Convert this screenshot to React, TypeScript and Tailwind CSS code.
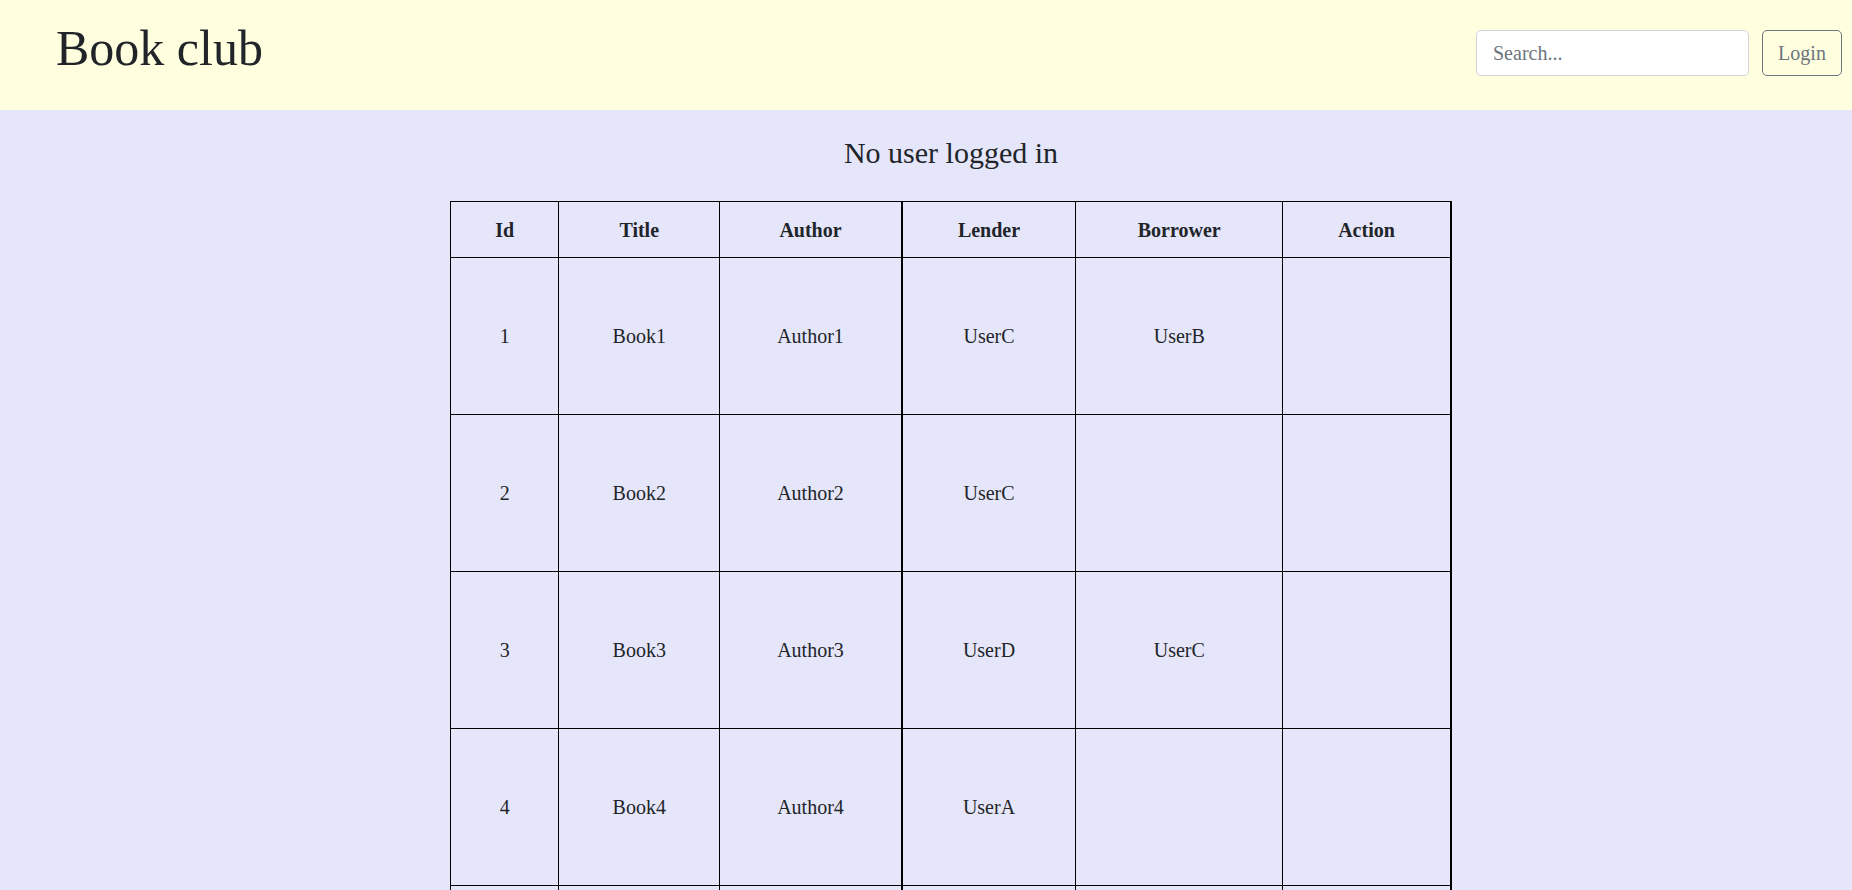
import { useState } from "react";

type Book = {
  id: number;
  title: string;
  author: string;
  lender: string;
  borrower: string;
};

const books: Book[] = [
  { id: 1, title: "Book1", author: "Author1", lender: "UserC", borrower: "UserB" },
  { id: 2, title: "Book2", author: "Author2", lender: "UserC", borrower: "" },
  { id: 3, title: "Book3", author: "Author3", lender: "UserD", borrower: "UserC" },
  { id: 4, title: "Book4", author: "Author4", lender: "UserA", borrower: "" },
  { id: 5, title: "Book5", author: "Author5", lender: "UserB", borrower: "" },
];

const cell = "border border-black text-center align-middle";

export default function App() {
  const [query, setQuery] = useState("");

  return (
    <div className="min-h-screen bg-[#e6e6fa] font-['Liberation_Serif','Times_New_Roman',serif] text-[#212529]">
      {/* Header */}
      <header className="flex h-[110px] items-start justify-between bg-[#ffffe0] pl-[56px] pr-[10px]">
        <h1 className="pt-[23px] text-[50px] leading-none font-normal">Book club</h1>
        <form className="flex gap-[13px] pt-[30px]" onSubmit={(e) => e.preventDefault()}>
          <input
            value={query}
            onChange={(e) => setQuery(e.target.value)}
            placeholder="Search..."
            className="h-[46px] w-[273px] rounded-[5px] border border-[#ced4da] bg-white px-[16px] text-[20px] text-[#212529] outline-none placeholder:text-[#6c757d]"
          />
          <button
            type="submit"
            className="h-[46px] w-[80px] rounded-[5px] border border-[#6c757d] bg-transparent text-[20px] text-[#6c757d]"
          >
            Login
          </button>
        </form>
      </header>

      {/* Main */}
      <main className="flex flex-col items-center pl-[50px]">
        <h4 className="mt-[28px] text-[30px] leading-[30px] font-normal">No user logged in</h4>

        <table className="mt-[33px] w-[1000px] table-fixed border-collapse text-[20px]">
          <colgroup>
            <col className="w-[108px]" />
            <col className="w-[161px]" />
            <col className="w-[182px]" />
            <col className="w-[174px]" />
            <col className="w-[207px]" />
            <col className="w-[168px]" />
          </colgroup>
          <thead>
            <tr className="h-[56px]">
              <th className={cell}>Id</th>
              <th className={cell}>Title</th>
              <th className={cell}>Author</th>
              <th className={`${cell} border-l-2`}>Lender</th>
              <th className={cell}>Borrower</th>
              <th className={`${cell} border-r-2`}>Action</th>
            </tr>
          </thead>
          <tbody>
            {books.map((b) => (
              <tr key={b.id} className="h-[157px]">
                <td className={cell}>{b.id}</td>
                <td className={cell}>{b.title}</td>
                <td className={cell}>{b.author}</td>
                <td className={`${cell} border-l-2`}>{b.lender}</td>
                <td className={cell}>{b.borrower}</td>
                <td className={`${cell} border-r-2`}></td>
              </tr>
            ))}
          </tbody>
        </table>
      </main>
    </div>
  );
}
